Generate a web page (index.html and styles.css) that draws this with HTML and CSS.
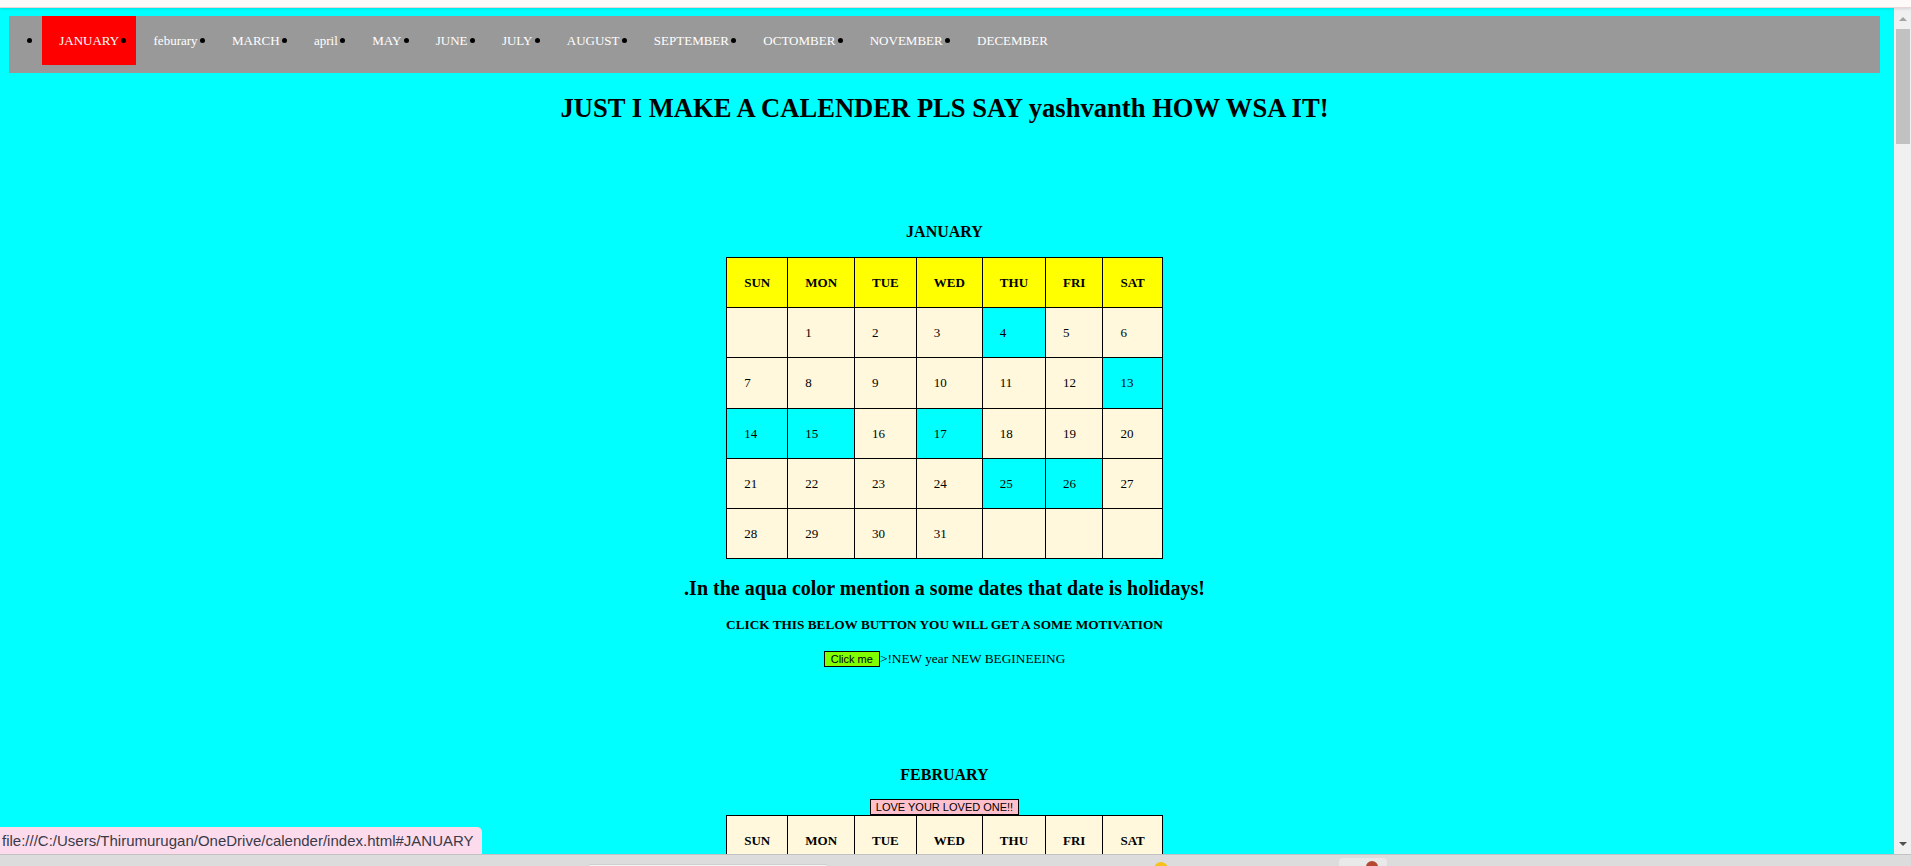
FILE: index.html
```html
<!DOCTYPE html>
<html lang="en">
<head>
<meta charset="utf-8">
<title>Calender</title>
<link rel="stylesheet" href="styles.css">
</head>
<body>
<div class="chrome-top"></div>
<div class="frame">
  <div class="viewport">
    <ul class="nav">
      <li class="active"><a href="#JANUARY">JANUARY</a></li>
      <li><a href="#FEBRUARY">feburary</a></li>
      <li><a href="#MARCH">MARCH</a></li>
      <li><a href="#APRIL">april</a></li>
      <li><a href="#MAY">MAY</a></li>
      <li><a href="#JUNE">JUNE</a></li>
      <li><a href="#JULY">JULY</a></li>
      <li><a href="#AUGUST">AUGUST</a></li>
      <li><a href="#SEPTEMBER">SEPTEMBER</a></li>
      <li><a href="#OCTOBER">OCTOMBER</a></li>
      <li><a href="#NOVEMBER">NOVEMBER</a></li>
      <li><a href="#DECEMBER">DECEMBER</a></li>
    </ul>

    <h1 class="title">JUST I MAKE A CALENDER PLS SAY yashvanth HOW WSA IT!</h1>

    <section class="month" id="JANUARY">
      <h4 class="month-name">JANUARY</h4>
      <table class="cal">
        <tr><th>SUN</th><th>MON</th><th>TUE</th><th>WED</th><th>THU</th><th>FRI</th><th>SAT</th></tr>
        <tr><td></td><td>1</td><td>2</td><td>3</td><td class="holiday">4</td><td>5</td><td>6</td></tr>
        <tr><td>7</td><td>8</td><td>9</td><td>10</td><td>11</td><td>12</td><td class="holiday">13</td></tr>
        <tr><td class="holiday">14</td><td class="holiday">15</td><td>16</td><td class="holiday">17</td><td>18</td><td>19</td><td>20</td></tr>
        <tr><td>21</td><td>22</td><td>23</td><td>24</td><td class="holiday">25</td><td class="holiday">26</td><td>27</td></tr>
        <tr><td>28</td><td>29</td><td>30</td><td>31</td><td></td><td></td><td></td></tr>
      </table>
      <h3 class="note">.In the aqua color mention a some dates that date is holidays!</h3>
      <h5 class="cta">CLICK THIS BELOW BUTTON YOU WILL GET A SOME MOTIVATION</h5>
      <p class="motivation"><button class="btn-green" type="button">Click me</button>&gt;!NEW year NEW BEGINEEING</p>
    </section>

    <section class="month month-feb" id="FEBRUARY">
      <h4 class="month-name">FEBRUARY</h4>
      <button class="btn-pink" type="button">LOVE YOUR LOVED ONE!!</button>
      <table class="cal cal-plain">
        <tr><th>SUN</th><th>MON</th><th>TUE</th><th>WED</th><th>THU</th><th>FRI</th><th>SAT</th></tr>
        <tr><td></td><td></td><td></td><td></td><td>1</td><td>2</td><td>3</td></tr>
        <tr><td>4</td><td>5</td><td>6</td><td>7</td><td>8</td><td>9</td><td>10</td></tr>
        <tr><td>11</td><td>12</td><td>13</td><td>14</td><td>15</td><td>16</td><td>17</td></tr>
        <tr><td>18</td><td>19</td><td>20</td><td>21</td><td>22</td><td>23</td><td>24</td></tr>
        <tr><td>25</td><td>26</td><td>27</td><td>28</td><td>29</td><td></td><td></td></tr>
      </table>
    </section>
  </div>
  <div class="scrollbar">
    <div class="sb-btn"><span class="arrow-up"></span></div>
    <div class="sb-thumb"></div>
    <div class="sb-track"></div>
    <div class="sb-btn"><span class="arrow-down"></span></div>
  </div>
</div>
<div class="taskbar">
  <span class="tb-search"></span>
  <span class="tb-dot"></span>
  <span class="tb-app"><span class="tb-app-icon"></span></span>
</div>
<div class="status">file:///C:/Users/Thirumurugan/OneDrive/calender/index.html#JANUARY</div>
</body>
</html>
```

FILE: styles.css
```css
html, body {
  margin: 0;
  padding: 0;
}

body {
  width: 1911px;
  height: 866px;
  overflow: hidden;
  display: flex;
  flex-direction: column;
  position: relative;
  font-family: "Liberation Serif", "Times New Roman", serif;
  color: #000;
  background: #fff;
}

.chrome-top {
  height: 7px;
  flex: none;
  background: #fffafa;
  border-bottom: 1px solid #ead6d6;
  position: relative;
  z-index: 2;
  box-shadow: 0 1px 3px rgba(0, 0, 0, 0.12);
}

.frame {
  flex: none;
  height: 846px;
  display: flex;
}

.viewport {
  flex: 1;
  background: #00ffff;
  overflow: hidden;
  padding: 8px 14px 0 9px;
}

/* ---------- nav ---------- */
.nav {
  list-style: none;
  margin: 0;
  padding: 0 0 0 33px;
  height: 57px;
  background: #999999;
  display: flex;
  align-items: flex-start;
}

.nav li {
  position: relative;
}

.nav li::before {
  content: "";
  position: absolute;
  left: -15px;
  top: 22px;
  width: 5px;
  height: 5px;
  border-radius: 50%;
  background: #000;
}

.nav a {
  display: block;
  padding: 17px 17.2px;
  font-size: 13px;
  line-height: 15px;
  color: #fff;
  text-decoration: none;
}

.nav li.active a {
  background: #ff0000;
}

/* ---------- headings ---------- */
.title {
  margin: 20px 0 0;
  font-size: 26.6px;
  line-height: 30px;
  font-weight: bold;
  text-align: center;
}

.month {
  text-align: center;
}

.month-name {
  margin: 100px 0 0;
  font-size: 16px;
  line-height: 18px;
  font-weight: bold;
}

.month-feb .month-name {
  margin-top: 99px;
}

/* ---------- calendar table ---------- */
.cal {
  margin: 16px auto 0;
  border-collapse: collapse;
}

.cal th,
.cal td {
  border: 1px solid #000;
  padding: 17px;
  font-size: 13px;
  line-height: 15.2px;
  background: #fff8dc;
  text-align: left;
  vertical-align: middle;
}

.cal th {
  background: #ffff00;
  text-align: center;
  font-weight: bold;
}

.cal td.holiday {
  background: #00ffff;
}

.cal-plain {
  margin-top: 0;
}

.cal-plain th {
  background: #fff8dc;
}

/* ---------- texts under table ---------- */
.note {
  margin: 18px 0 0;
  font-size: 20px;
  line-height: 23px;
  font-weight: bold;
}

.cta {
  margin: 17px 0 0;
  font-size: 13.28px;
  line-height: 15px;
  font-weight: bold;
}

.motivation {
  margin: 19px 0 0;
  font-size: 13.3px;
  line-height: 16px;
}

.btn-green,
.btn-pink {
  font-family: "Liberation Sans", Arial, sans-serif;
  font-size: 11px;
  line-height: 14px;
  height: 16px;
  padding: 0 6px;
  margin: 0;
  border: 1px solid #000;
  border-radius: 0;
  color: #000;
}

.btn-green {
  background: #7fff00;
  vertical-align: baseline;
}

.btn-pink {
  display: block;
  margin: 15px auto 0;
  padding: 0 5px;
  background: #ffc0cb;
}

/* ---------- scrollbar ---------- */
.scrollbar {
  width: 17px;
  flex: none;
  background: #f0f0f0;
  display: flex;
  flex-direction: column;
}

.sb-btn {
  height: 21px;
  flex: none;
  display: flex;
  align-items: center;
  justify-content: center;
}

.arrow-up {
  width: 0;
  height: 0;
  border-left: 4.5px solid transparent;
  border-right: 4.5px solid transparent;
  border-bottom: 4px solid #a3a3a3;
}

.arrow-down {
  width: 0;
  height: 0;
  border-left: 4.5px solid transparent;
  border-right: 4.5px solid transparent;
  border-top: 4px solid #505050;
}

.sb-thumb {
  height: 115px;
  flex: none;
  margin: 0 1px 0 2px;
  background: #c1c1c1;
}

.sb-track {
  flex: 1;
}

/* ---------- taskbar ---------- */
.taskbar {
  flex: none;
  height: 11px;
  background: #dcdcdc;
  border-top: 1px solid #c2c2c2;
  display: flex;
  align-items: flex-start;
  overflow: hidden;
}

.tb-search {
  margin: 9px 0 0 586px;
  width: 244px;
  height: 10px;
  background: #f4f4f4;
  border: 1px solid #cfcfcf;
  border-radius: 5px;
  box-sizing: border-box;
}

.tb-dot {
  margin: 7px 0 0 324px;
  width: 14px;
  height: 14px;
  border-radius: 50%;
  background: #f7c21b;
}

.tb-app {
  margin: 3px 0 0 171px;
  width: 48px;
  height: 20px;
  background: #e9e9e9;
  border-radius: 4px;
  display: flex;
  justify-content: flex-end;
  padding-right: 9px;
  box-sizing: border-box;
}

.tb-app-icon {
  margin-top: 3px;
  width: 12px;
  height: 12px;
  border-radius: 50% 50% 2px 2px;
  background: #b5482f;
}

/* ---------- link status tooltip ---------- */
.status {
  position: absolute;
  left: 0;
  bottom: 12px;
  width: 482px;
  height: 27px;
  box-sizing: border-box;
  padding-left: 2px;
  background: #fcdcec;
  border-top-right-radius: 5px;
  font-family: "Liberation Sans", Arial, sans-serif;
  font-size: 15px;
  line-height: 27px;
  color: #3a3a48;
  white-space: nowrap;
  overflow: hidden;
}
```
